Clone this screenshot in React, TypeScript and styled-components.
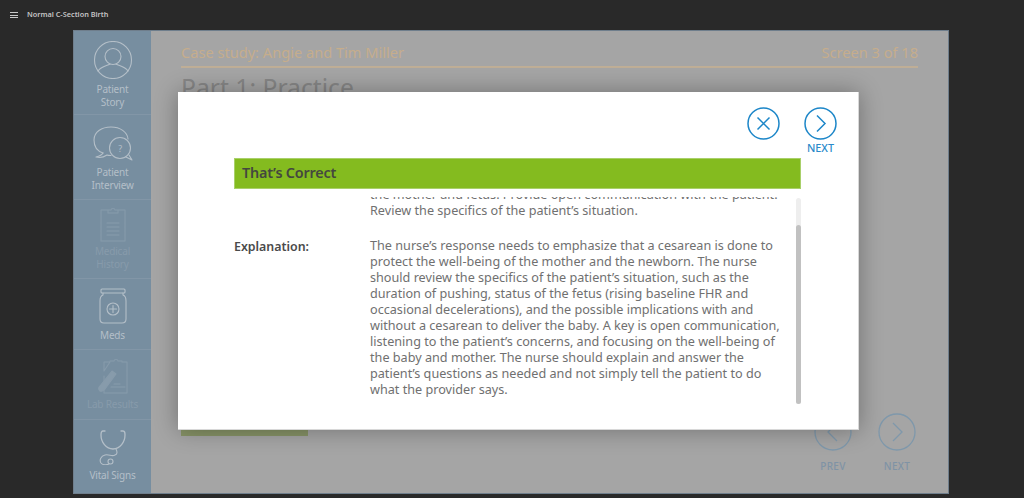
import React from "react";
import styled, { createGlobalStyle } from "styled-components";

const Global = createGlobalStyle`
  html, body { margin: 0; padding: 0; background: #292929; }
  body { font-family: "Noto Sans", "Open Sans", sans-serif; overflow: hidden; }
  * { box-sizing: border-box; }
`;

const Page = styled.div`
  width: 1024px;
  height: 498px;
  display: flex;
  flex-direction: column;
  background: #292929;
`;
const TopBar = styled.header`
  height: 30px;
  display: flex;
  align-items: center;
  gap: 9px;
  padding: 0 0 2px 10px;
  color: #c4c4c4;
  font-size: 7.3px;
  font-weight: 600;
`;
const Burger = styled.span`
  width: 8px;
  height: 6px;
  margin-top: 2px;
  border-top: 1px solid #c8c8c8;
  border-bottom: 1px solid #c8c8c8;
  &::after { content: ""; display: block; height: 1px; margin-top: 1.5px; background: #c8c8c8; }
`;
const Stage = styled.div`
  position: relative;
  width: 876px;
  height: 464px;
  margin-left: 73px;
  display: flex;
  background: #a5a5a5;
  border: 1px solid #6f7e8c;
`;
const Sidebar = styled.nav`
  width: 77px;
  display: flex;
  flex-direction: column;
  background: #778ea0;
`;
const NavItem = styled.div<{ $h: number; $top: number; $dim?: boolean }>`
  height: ${(p) => p.$h}px;
  display: flex;
  flex-direction: column;
  align-items: center;
  padding-top: ${(p) => p.$top}px;
  border-bottom: 1px solid #8296a7;
  color: ${(p) => (p.$dim ? "#879bab" : "#b4bfc8")};
  font-size: 10px;
  letter-spacing: -0.2px;
  line-height: 12.5px;
  text-align: center;
  &:last-child { border-bottom: 0; }
  svg { flex: none; margin-bottom: 3px; }
`;
const NavLabel = styled.div<{ $gap: number }>`
  margin-top: ${(p) => p.$gap}px;
`;
const Main = styled.main`
  flex: 1;
  display: flex;
  flex-direction: column;
  padding: 8px 30px 0 30px;
`;
const HeaderRow = styled.div`
  display: flex;
  justify-content: space-between;
  align-items: center;
  height: 29px;
  padding-bottom: 1px;
  border-bottom: 2px solid #bfae96;
  color: #c6ad8c;
  font-size: 14.6px;
`;
const PartTitle = styled.h1`
  margin: 2px 0 0;
  font-size: 24.7px;
  line-height: 36px;
  font-weight: 400;
  color: #868686;
`;
const Footer = styled.div`
  margin-top: auto;
  display: flex;
  justify-content: space-between;
  height: 84px;
`;
const GreenStub = styled.div`
  width: 127px;
  height: 27px;
  background: #879367;
`;
const FooterNav = styled.div`
  display: flex;
  gap: 26px;
  margin-right: 2px;
  padding-top: 4px;
`;
const NavBtn = styled.div`
  width: 38px;
  display: flex;
  flex-direction: column;
  align-items: center;
  color: #7f93a5;
  font-size: 10px;
  font-weight: 500;
  letter-spacing: 0.3px;
  gap: 8px;
`;
const Modal = styled.section`
  position: absolute;
  left: 104px;
  top: 61px;
  width: 681px;
  height: 338px;
  background: #fff;
  box-shadow: 0 0 22px rgba(0, 0, 0, 0.32);
  border: 1px solid #d8d8d8;
  border-width: 0 1px 1px 0;
  display: flex;
  flex-direction: column;
  padding: 15px 21px 0 56px;
`;
const Actions = styled.div`
  height: 51px;
  display: flex;
  justify-content: flex-end;
  gap: 24px;
`;
const ActionBtn = styled.div`
  width: 33px;
  display: flex;
  flex-direction: column;
  align-items: center;
  color: #2a8aca;
  font-size: 10.8px;
  line-height: 12px;
  font-weight: 500;
  gap: 2px;
`;
const Banner = styled.div`
  width: 567px;
  height: 31px;
  flex: none;
  display: flex;
  align-items: center;
  padding: 0 0 2px 7px;
  background: #84bb1f;
  border: 1px solid #a9d06a;
  color: #44483f;
  font-size: 14.4px;
  letter-spacing: -0.2px;
  font-weight: 600;
`;
const ScrollArea = styled.div`
  position: relative;
  width: 567px;
  flex: none;
  height: 213px;
  margin-top: 8px;
  overflow: hidden;
  color: #707070;
  font-size: 12.65px;
  line-height: 16px;
`;
const ScrollContent = styled.div`
  margin-top: -11px;
  display: flex;
  flex-direction: column;
  gap: 19px;
`;
const Row = styled.div`
  display: grid;
  grid-template-columns: 136px 416px;
`;
const Label = styled.div`
  color: #4a4a4a;
  font-weight: 600;
  font-size: 12.4px;
  padding-top: 2px;
`;
const ScrollTrack = styled.div`
  position: absolute;
  right: 0;
  top: 1px;
  width: 5px;
  height: 206px;
  border-radius: 3px;
  background: #eeeeee;
`;
const ScrollThumb = styled.div`
  position: absolute;
  left: 0;
  right: 0;
  bottom: 0;
  height: 179px;
  border-radius: 3px;
  background: #c1c1c1;
`;

const s = { fill: "none", stroke: "#b4bfc8", strokeWidth: 1.1, strokeLinecap: "round" as const, strokeLinejoin: "round" as const };
const d = { ...s, stroke: "#879bab" };

const App = () => (
  <Page>
    <Global />
    <TopBar>
      <Burger />
      <span>Normal C-Section Birth</span>
    </TopBar>
    <Stage>
      <Sidebar>
        <NavItem $h={84} $top={10}>
          <svg width="40" height="38" viewBox="0 0 40 38" {...s}>
            <circle cx="20" cy="19" r="18.500" />
            <circle cx="20" cy="15.500" r="8" />
            <path d="M5 30c3-4.500 8-5 12-7M35 30c-3-4.500-8-5-12-7" />
          </svg>
          <NavLabel $gap={1}>Patient<br />Story</NavLabel>
        </NavItem>
        <NavItem $h={85} $top={11}>
          <svg width="40" height="35" viewBox="0 0 40 35" {...s}>
            <path d="M10 27C4 25 1 20 1 14 1 6 8.500 1 18 1c9 0 16.500 5 17 12" />
            <path d="M10 27c-1 2-3 3-7 4 4 1 8 0 11-2 1 .5 2 .5 4 .5" />
            <circle cx="27" cy="22" r="10.500" />
            <path d="M33 31l6 3-3-5" />
            <text x="27" y="25.500" fontSize="9" fill="#b4bfc8" stroke="none" textAnchor="middle">?</text>
          </svg>
          <NavLabel $gap={2}>Patient<br />Interview</NavLabel>
        </NavItem>
        <NavItem $h={79} $top={6} $dim>
          <svg width="28" height="36" viewBox="0 0 28 36" {...d}>
            <path d="M9 4h3c0-2 4-2 4 0h3M9 4H2v31h24V4h-7v3H9zM8 17h12M8 21h12M8 25h12M8 29h12" />
          </svg>
          <NavLabel $gap={0}>Medical<br />History</NavLabel>
        </NavItem>
        <NavItem $h={71} $top={9}>
          <svg width="28" height="36" viewBox="0 0 28 36" {...s}>
            <rect x="2" y="1" width="24" height="4" rx="1" />
            <path d="M4 5v2C1 8 1 11 1 13v18c0 3 2 4 4 4h18c2 0 4-1 4-4V13c0-2 0-5-3-6V5" />
            <circle cx="14" cy="21" r="6" />
            <path d="M14 17.500v7M10.500 21h7" />
          </svg>
          <NavLabel $gap={2}>Meds</NavLabel>
        </NavItem>
        <NavItem $h={70} $top={8} $dim>
          <svg width="32" height="36" viewBox="0 0 32 36" {...d}>
            <path d="M13 3h4c0-2 4-2 4 0h4v1h5v31H7V18M7 13V4h6z" />
            <path d="M3 33c-2-2-2-3 0-5L15 13l4 3L8 31c-2 2-3 3-5 2z" fill="#879bab" />
            <path d="M17 26h6M14 29h14" />
          </svg>
          <NavLabel $gap={1}>Lab Results</NavLabel>
        </NavItem>
        <NavItem $h={73} $top={9}>
          <svg width="30" height="36" viewBox="0 0 30 36" {...s}>
            <path d="M7 2H5C3 2 3 4 3 6c0 7 5 14 12 14s12-7 12-14c0-2 0-4-2-4h-2" strokeWidth="1.300" />
            <path d="M18 20c1 2 2 5-1 6-3 2-6-1-10 0-4 1-6 5-4 8 2 2.500 6 2 8 1" />
            <circle cx="12.500" cy="32.500" r="2.500" />
          </svg>
          <NavLabel $gap={1}>Vital Signs</NavLabel>
        </NavItem>
      </Sidebar>
      <Main>
        <HeaderRow>
          <span>Case study: Angie and Tim Miller</span>
          <span>Screen 3 of 18</span>
        </HeaderRow>
        <PartTitle>Part 1: Practice</PartTitle>
        <Footer>
          <GreenStub />
          <FooterNav>
            <NavBtn>
              <svg width="38" height="38" viewBox="0 0 38 38" fill="none" stroke="#7f98ab" strokeWidth="1.3">
                <circle cx="19" cy="19" r="18" />
                <path d="M23 10l-9 9 9 9" />
              </svg>
              <span>PREV</span>
            </NavBtn>
            <NavBtn>
              <svg width="38" height="38" viewBox="0 0 38 38" fill="none" stroke="#7f98ab" strokeWidth="1.3">
                <circle cx="19" cy="19" r="18" />
                <path d="M15 10l9 9-9 9" />
              </svg>
              <span>NEXT</span>
            </NavBtn>
          </FooterNav>
        </Footer>
      </Main>
      <Modal>
        <Actions>
          <ActionBtn>
            <svg width="33" height="33" viewBox="0 0 33 33" fill="none" stroke="#1c86c8" strokeWidth="1.500">
              <circle cx="16.500" cy="16.500" r="15.500" />
              <path d="M10.500 10.500l12 12M22.500 10.500l-12 12" />
            </svg>
          </ActionBtn>
          <ActionBtn>
            <svg width="33" height="33" viewBox="0 0 33 33" fill="none" stroke="#1c86c8" strokeWidth="1.500">
              <circle cx="16.500" cy="16.500" r="15.500" />
              <path d="M13 8.500l8 8-8 8" />
            </svg>
            <span>NEXT</span>
          </ActionBtn>
        </Actions>
        <Banner>That’s Correct</Banner>
        <ScrollArea>
          <ScrollContent>
            <Row>
              <div />
              <div>the mother and fetus. Provide open communication with the patient. Review the specifics of the patient’s situation.</div>
            </Row>
            <Row>
              <Label>Explanation:</Label>
              <div>The nurse’s response needs to emphasize that a cesarean is done to protect the well-being of the mother and the newborn. The nurse should review the specifics of the patient’s situation, such as the duration of pushing, status of the fetus (rising baseline FHR and occasional decelerations), and the possible implications with and without a cesarean to deliver the baby. A key is open communication, listening to the patient’s concerns, and focusing on the well-being of the baby and mother. The nurse should explain and answer the patient’s questions as needed and not simply tell the patient to do what the provider says.</div>
            </Row>
          </ScrollContent>
          <ScrollTrack>
            <ScrollThumb />
          </ScrollTrack>
        </ScrollArea>
      </Modal>
    </Stage>
  </Page>
);

export default App;
